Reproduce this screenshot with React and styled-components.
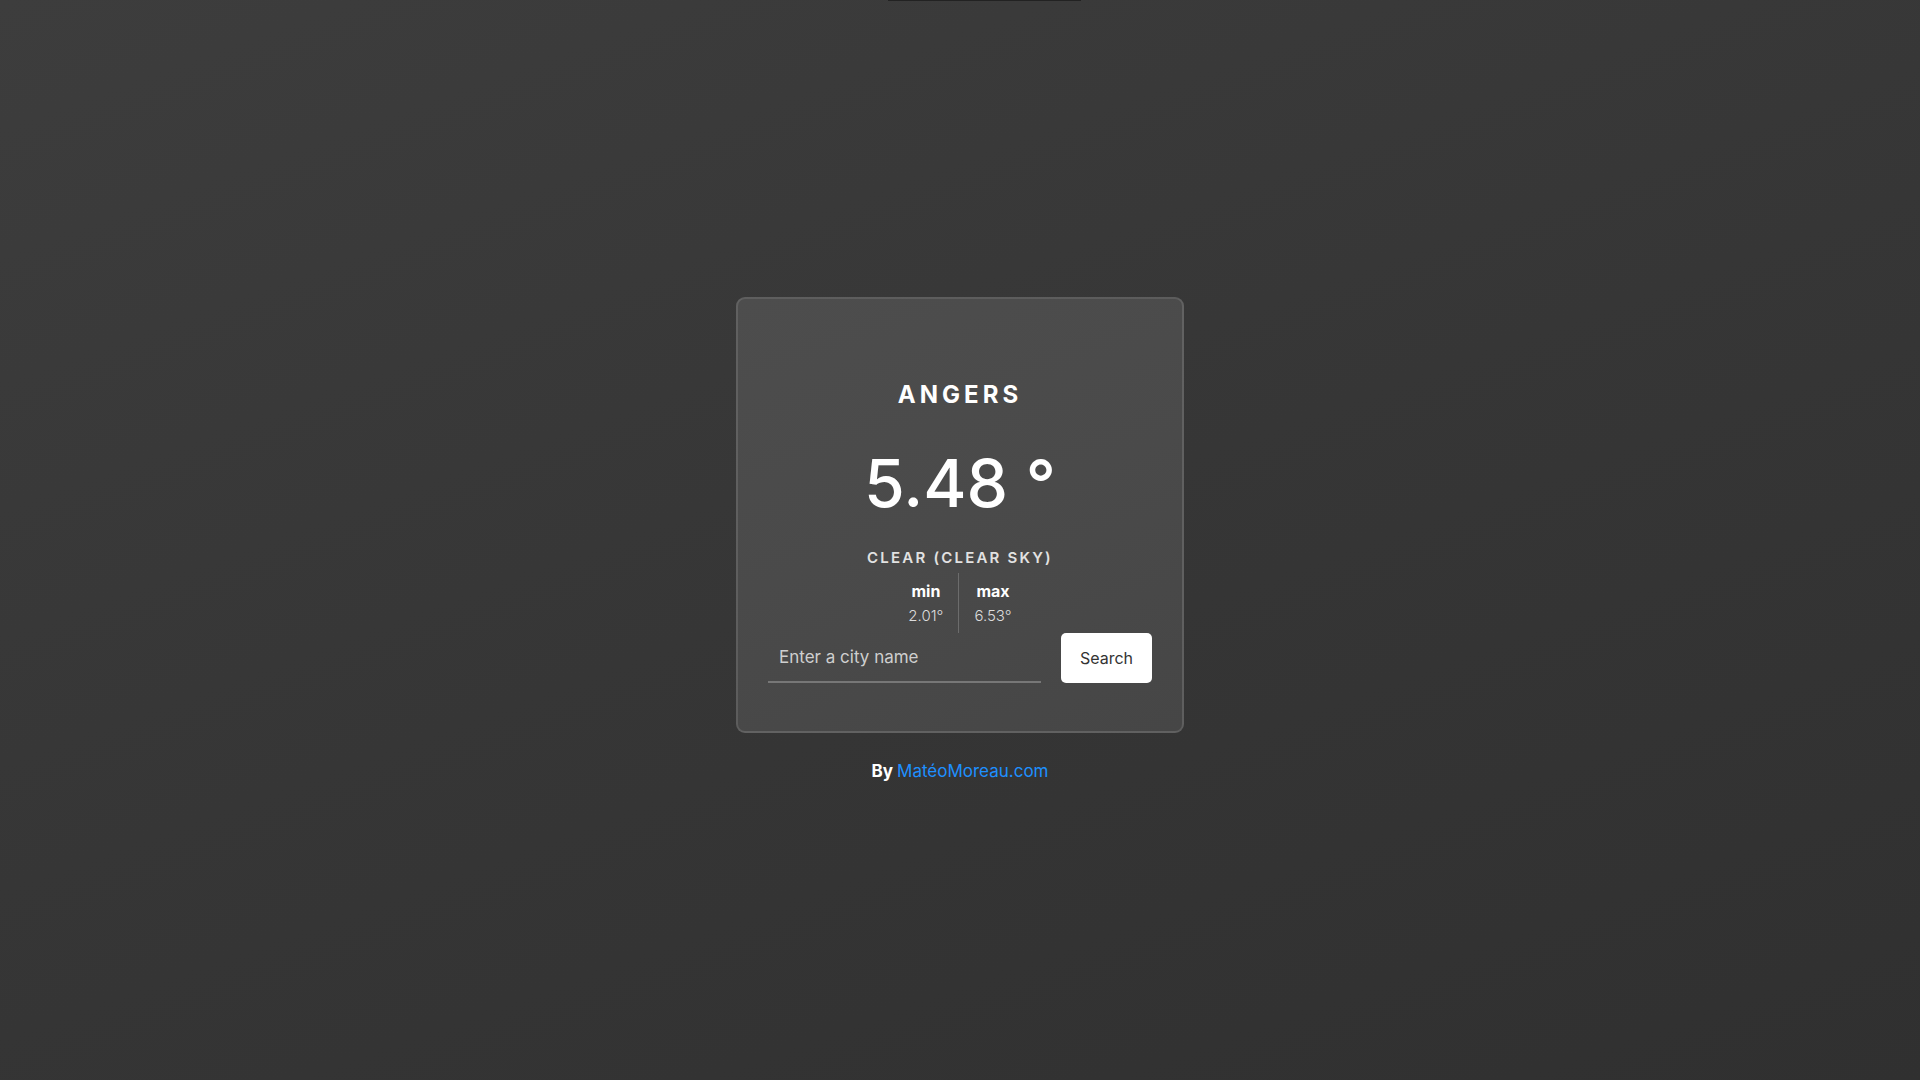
import styled, { createGlobalStyle } from "styled-components";

const GlobalStyle = createGlobalStyle`
  * {
    box-sizing: border-box;
  }
  body {
    margin: 0;
    font-family: Inter, "Open Sans", sans-serif;
    color: #fff;
    background: linear-gradient(160deg, #3d3d3d 0%, #363636 50%, #303030 100%);
    min-height: 100vh;
  }
`;

const weather = {
  city: "Angers",
  temp: 5.48,
  main: "Clear",
  description: "clear sky",
  min: 2.01,
  max: 6.53,
};

export default function App() {
  return (
    <>
      <GlobalStyle />
      <TopBar />
      <Page>
        <Card>
          <City>{weather.city}</City>
          <Temp>{weather.temp} °</Temp>
          <Description>
            {weather.main} ({weather.description})
          </Description>
          <MinMax>
            <Column>
              <Label>min</Label>
              <Value>{weather.min}°</Value>
            </Column>
            <Divider />
            <Column>
              <Label>max</Label>
              <Value>{weather.max}°</Value>
            </Column>
          </MinMax>
          <SearchRow>
            <CityInput placeholder="Enter a city name" />
            <SearchButton>Search</SearchButton>
          </SearchRow>
        </Card>
        <Footer>
          By <Link href="#">MatéoMoreau.com</Link>
        </Footer>
      </Page>
    </>
  );
}

const TopBar = styled.div`
  position: absolute;
  top: 0;
  left: 888px;
  width: 193px;
  height: 1px;
  background-color: #222;
`;

const Page = styled.div`
  display: flex;
  flex-direction: column;
  align-items: center;
  justify-content: center;
  min-height: 100vh;
`;

const Card = styled.div`
  width: 448px;
  padding: 81px 30px 48px;
  display: flex;
  flex-direction: column;
  align-items: center;
  border: 2px solid rgba(255, 255, 255, 0.12);
  border-radius: 9px;
  background: linear-gradient(160deg, #4d4d4d 0%, #4a4a4a 50%, #464646 100%);
`;

const City = styled.h1`
  margin: 0;
  font-size: 24px;
  line-height: 30px;
  font-weight: 700;
  letter-spacing: 4px;
  text-transform: uppercase;
`;

const Temp = styled.div`
  margin-top: 33px;
  font-size: 66px;
  line-height: 80px;
  font-weight: 500;
`;

const Description = styled.div`
  margin-top: 25px;
  font-size: 15px;
  line-height: 20px;
  font-weight: 600;
  letter-spacing: 2.2px;
  text-transform: uppercase;
  color: #e2e2e2;
`;

const MinMax = styled.div`
  margin-top: 5px;
  display: flex;
  height: 60px;
`;

const Column = styled.div`
  display: flex;
  flex-direction: column;
  align-items: center;
  padding: 6px 15px 0;
`;

const Divider = styled.div`
  width: 1px;
  background-color: #6c6c6c;
`;

const Label = styled.span`
  font-size: 16px;
  line-height: 24px;
  font-weight: 700;
`;

const Value = styled.span`
  margin-top: 1px;
  font-size: 15px;
  line-height: 24px;
  font-weight: 300;
  color: #dcdcdc;
`;

const SearchRow = styled.div`
  display: flex;
  gap: 20px;
  width: 100%;
`;

const CityInput = styled.input`
  flex: 1;
  min-width: 0;
  height: 50px;
  padding: 0 11px;
  border: none;
  border-bottom: 2px solid #777;
  background: transparent;
  color: #fff;
  font-family: inherit;
  font-size: 17px;
  outline: none;

  &::placeholder {
    color: #cfcfcf;
  }
`;

const SearchButton = styled.button`
  flex: 0 0 91px;
  height: 50px;
  border: none;
  border-radius: 5px;
  background-color: #fff;
  color: #333;
  font-family: inherit;
  font-size: 16px;
  cursor: pointer;
`;

const Footer = styled.p`
  margin: 26px 0 0;
  font-size: 17px;
  line-height: 24px;
  font-weight: 700;
`;

const Link = styled.a`
  color: #1e90ff;
  font-weight: 400;
  text-decoration: none;
`;
